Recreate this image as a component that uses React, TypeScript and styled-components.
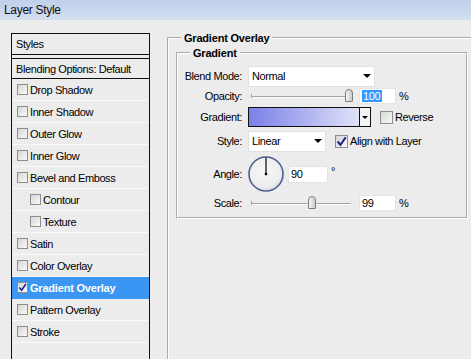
import React from "react";
import styled, { createGlobalStyle } from "styled-components";

const GlobalStyle = createGlobalStyle`
  html, body {
    margin: 0;
    padding: 0;
    background: #ececec;
    overflow: hidden;
  }
  body {
    font-family: "Liberation Sans", Arial, sans-serif;
    font-size: 11px;
    letter-spacing: -0.4px;
    color: #000;
  }
`;

const Window = styled.div`
  width: 471px;
  height: 359px;
  display: flex;
  flex-direction: column;
  background: #ececec;
  overflow: hidden;
`;

const TitleBar = styled.div`
  height: 20px;
  flex-shrink: 0;
  display: flex;
  align-items: center;
  padding-left: 4px;
  background: linear-gradient(#bfd0ea, #d3dff0);
  font-size: 12px;
  letter-spacing: -0.3px;
  color: #111;
`;

const Body = styled.div`
  flex: 1;
  display: flex;
  align-items: flex-start;
`;

const StyleList = styled.div`
  margin: 13px 0 0 11px;
  width: 139px;
  height: 340px;
  box-sizing: border-box;
  border: 1px solid #111;
  border-bottom: none;
  flex-shrink: 0;
`;

const HeadRow = styled.div<{ $top?: boolean }>`
  height: ${(p) => (p.$top ? 20 : 19)}px;
  display: flex;
  align-items: center;
  padding-left: 4px;
  border-bottom: 1px solid #111;
  border-top: ${(p) => (p.$top ? "none" : "1px solid #111")};
`;

const Gap = styled.div`
  height: 3px;
`;

const ListItem = styled.div<{ $indent?: boolean; $selected?: boolean }>`
  height: 21px;
  display: flex;
  align-items: center;
  gap: 2px;
  padding-left: ${(p) => (p.$indent ? 18 : 5)}px;
  border-bottom: 1px solid ${(p) => (p.$selected ? "#3a96f2" : "#fafafa")};
  background: ${(p) => (p.$selected ? "#3a96f2" : "transparent")};
  color: ${(p) => (p.$selected ? "#fff" : "#000")};
  font-weight: ${(p) => (p.$selected ? "bold" : "normal")};
  letter-spacing: ${(p) => (p.$selected ? "-0.2px" : "-0.4px")};
`;

const Box = styled.span<{ $size: number }>`
  width: ${(p) => p.$size}px;
  height: ${(p) => p.$size}px;
  box-sizing: border-box;
  border: 1px solid #8e8e8e;
  background: linear-gradient(135deg, #d6d6d6, #f9f9f9);
  display: inline-flex;
  align-items: center;
  justify-content: center;
  flex-shrink: 0;
`;

function Checkbox({ checked = false, size = 11 }: { checked?: boolean; size?: number }) {
  return (
    <Box $size={size}>
      {checked && (
        <svg width={size - 2} height={size - 2} viewBox="0 0 10 10">
          <path d="M1.5 5 L4 8 L8.8 1.2" fill="none" stroke="#20208c" strokeWidth="1.8" />
        </svg>
      )}
    </Box>
  );
}

const Main = styled.div`
  flex: 1;
  margin-left: 17px;
  min-width: 0;
`;

const Group = styled.fieldset<{ $outer?: boolean }>`
  margin: ${(p) => (p.$outer ? "12px 0 0 0" : "3px 0 0 7px")};
  padding: ${(p) => (p.$outer ? "0" : "6px 0 6px 0")};
  min-width: 0;
  box-sizing: border-box;
  width: ${(p) => (p.$outer ? "auto" : "292px")};
  height: ${(p) => (p.$outer ? "340px" : "auto")};
  border: 2px groove #fff;
  border-right: ${(p) => (p.$outer ? "none" : "2px groove #fff")};
  border-bottom: ${(p) => (p.$outer ? "none" : "2px groove #fff")};
`;

const Legend = styled.legend`
  margin-left: 12px;
  padding: 0 3px;
  line-height: 12px;
  font-weight: bold;
  letter-spacing: -0.2px;
`;

const Row = styled.div<{ $h: number }>`
  height: ${(p) => p.$h}px;
  display: grid;
  grid-template-columns: 64px 1fr;
  column-gap: 6px;
  align-items: center;
`;

const Label = styled.span`
  text-align: right;
`;

const Controls = styled.div`
  display: flex;
  align-items: center;
`;

const Select = styled.div<{ $w: number }>`
  width: ${(p) => p.$w}px;
  height: 21px;
  box-sizing: border-box;
  background: #fff;
  border: 1px solid #e1e1e1;
  display: flex;
  align-items: center;
  justify-content: space-between;
  padding: 0 3px 0 3px;
`;

const Arrow = styled.span<{ $small?: boolean }>`
  width: 0;
  height: 0;
  border-left: ${(p) => (p.$small ? 3 : 4)}px solid transparent;
  border-right: ${(p) => (p.$small ? 3 : 4)}px solid transparent;
  border-top: ${(p) => (p.$small ? 3 : 4)}px solid #000;
`;

const Track = styled.div`
  position: relative;
  width: 100px;
  height: 16px;
  margin-left: 3px;
  &::before {
    content: "";
    position: absolute;
    left: 0;
    right: 0;
    top: 8px;
    height: 1px;
    background: #a3a3a3;
    box-shadow: 0 1px 0 #fff;
  }
  &::after {
    content: "";
    position: absolute;
    left: 0;
    top: 6px;
    width: 1px;
    height: 4px;
    background: #a3a3a3;
  }
`;

const Thumb = styled.span<{ $pos: number }>`
  position: absolute;
  left: ${(p) => p.$pos}px;
  top: 1px;
  width: 8px;
  height: 13px;
  box-sizing: border-box;
  border: 1px solid #7d7d7d;
  border-radius: 4px 4px 1px 1px;
  background: linear-gradient(90deg, #f6f6f6, #c9c9c9);
`;

const Field = styled.div<{ $w: number; $h?: number; $ml?: number }>`
  width: ${(p) => p.$w}px;
  height: ${(p) => p.$h ?? 16}px;
  margin-left: ${(p) => p.$ml ?? 0}px;
  box-sizing: border-box;
  background: #fff;
  border: 1px solid #e4e4e4;
  display: flex;
  align-items: center;
  padding-left: 2px;
`;

const Selected = styled.span`
  background: #3399ff;
  color: #fff;
  padding: 0 2px 0 1px;
  line-height: 12px;
`;

const Unit = styled.span<{ $raise?: boolean }>`
  margin-left: 3px;
  align-self: ${(p) => (p.$raise ? "flex-start" : "center")};
  margin-top: ${(p) => (p.$raise ? "10px" : "0")};
`;

const Swatch = styled.div`
  width: 123px;
  height: 20px;
  box-sizing: border-box;
  border: 1px solid #111;
  display: flex;
`;

const Ramp = styled.div`
  flex: 1;
  background: linear-gradient(90deg, #7a80e8, #e0e2f7);
`;

const RampButton = styled.div`
  width: 10px;
  border-left: 1px solid #111;
  background: #f4f4f4;
  display: flex;
  align-items: center;
  justify-content: center;
`;

const CheckLabel = styled.label<{ $gap: number }>`
  display: flex;
  align-items: center;
  gap: 2px;
  margin-left: ${(p) => p.$gap}px;
`;

const Dial = styled.svg`
  margin-left: -1px;
  margin-right: 3px;
  flex-shrink: 0;
`;

const items: { name: string; indent?: boolean; selected?: boolean }[] = [
  { name: "Drop Shadow" },
  { name: "Inner Shadow" },
  { name: "Outer Glow" },
  { name: "Inner Glow" },
  { name: "Bevel and Emboss" },
  { name: "Contour", indent: true },
  { name: "Texture", indent: true },
  { name: "Satin" },
  { name: "Color Overlay" },
  { name: "Gradient Overlay", selected: true },
  { name: "Pattern Overlay" },
  { name: "Stroke" },
];

export default function App() {
  return (
    <Window>
      <GlobalStyle />
      <TitleBar>Layer Style</TitleBar>
      <Body>
        <StyleList>
          <HeadRow $top>Styles</HeadRow>
          <Gap />
          <HeadRow>Blending Options: Default</HeadRow>
          {items.map((it) => (
            <ListItem key={it.name} $indent={it.indent} $selected={it.selected}>
              <Checkbox checked={it.selected} />
              {it.name}
            </ListItem>
          ))}
        </StyleList>

        <Main>
          <Group $outer>
            <Legend>Gradient Overlay</Legend>
            <Group>
              <Legend>Gradient</Legend>

              <Row $h={22}>
                <Label>Blend Mode:</Label>
                <Controls>
                  <Select $w={127}>
                    Normal
                    <Arrow />
                  </Select>
                </Controls>
              </Row>

              <Row $h={18}>
                <Label>Opacity:</Label>
                <Controls>
                  <Track>
                    <Thumb $pos={94} />
                  </Track>
                  <Field $w={37} $ml={8}>
                    <Selected>100</Selected>
                  </Field>
                  <Unit>%</Unit>
                </Controls>
              </Row>

              <Row $h={24}>
                <Label>Gradient:</Label>
                <Controls>
                  <Swatch>
                    <Ramp />
                    <RampButton>
                      <Arrow $small />
                    </RampButton>
                  </Swatch>
                  <CheckLabel $gap={9}>
                    <Checkbox size={13} />
                    Reverse
                  </CheckLabel>
                </Controls>
              </Row>

              <Row $h={24}>
                <Label>Style:</Label>
                <Controls>
                  <Select $w={78}>
                    Linear
                    <Arrow />
                  </Select>
                  <CheckLabel $gap={9}>
                    <Checkbox size={13} checked />
                    Align with Layer
                  </CheckLabel>
                </Controls>
              </Row>

              <Row $h={42}>
                <Label>Angle:</Label>
                <Controls>
                  <Dial width="38" height="38" viewBox="0 0 38 38">
                    <defs>
                      <radialGradient id="dialFill" cx="0.45" cy="0.4" r="0.6">
                        <stop offset="0" stopColor="#f7f7f7" />
                        <stop offset="0.8" stopColor="#ededed" />
                        <stop offset="1" stopColor="#d8dbe4" />
                      </radialGradient>
                    </defs>
                    <circle cx="19" cy="19" r="17" fill="url(#dialFill)" stroke="#4d6191" strokeWidth="1.6" />
                    <line x1="19" y1="19" x2="19" y2="2.5" stroke="#000" strokeWidth="1.2" />
                    <rect x="17.8" y="17.8" width="2.4" height="2.4" fill="#000" />
                  </Dial>
                  <Field $w={40} $h={17}>
                    90
                  </Field>
                  <Unit $raise>°</Unit>
                </Controls>
              </Row>

              <Row $h={16}>
                <Label>Scale:</Label>
                <Controls>
                  <Track>
                    <Thumb $pos={57} />
                  </Track>
                  <Field $w={37} $ml={8}>
                    99
                  </Field>
                  <Unit>%</Unit>
                </Controls>
              </Row>
            </Group>
          </Group>
        </Main>
      </Body>
    </Window>
  );
}
